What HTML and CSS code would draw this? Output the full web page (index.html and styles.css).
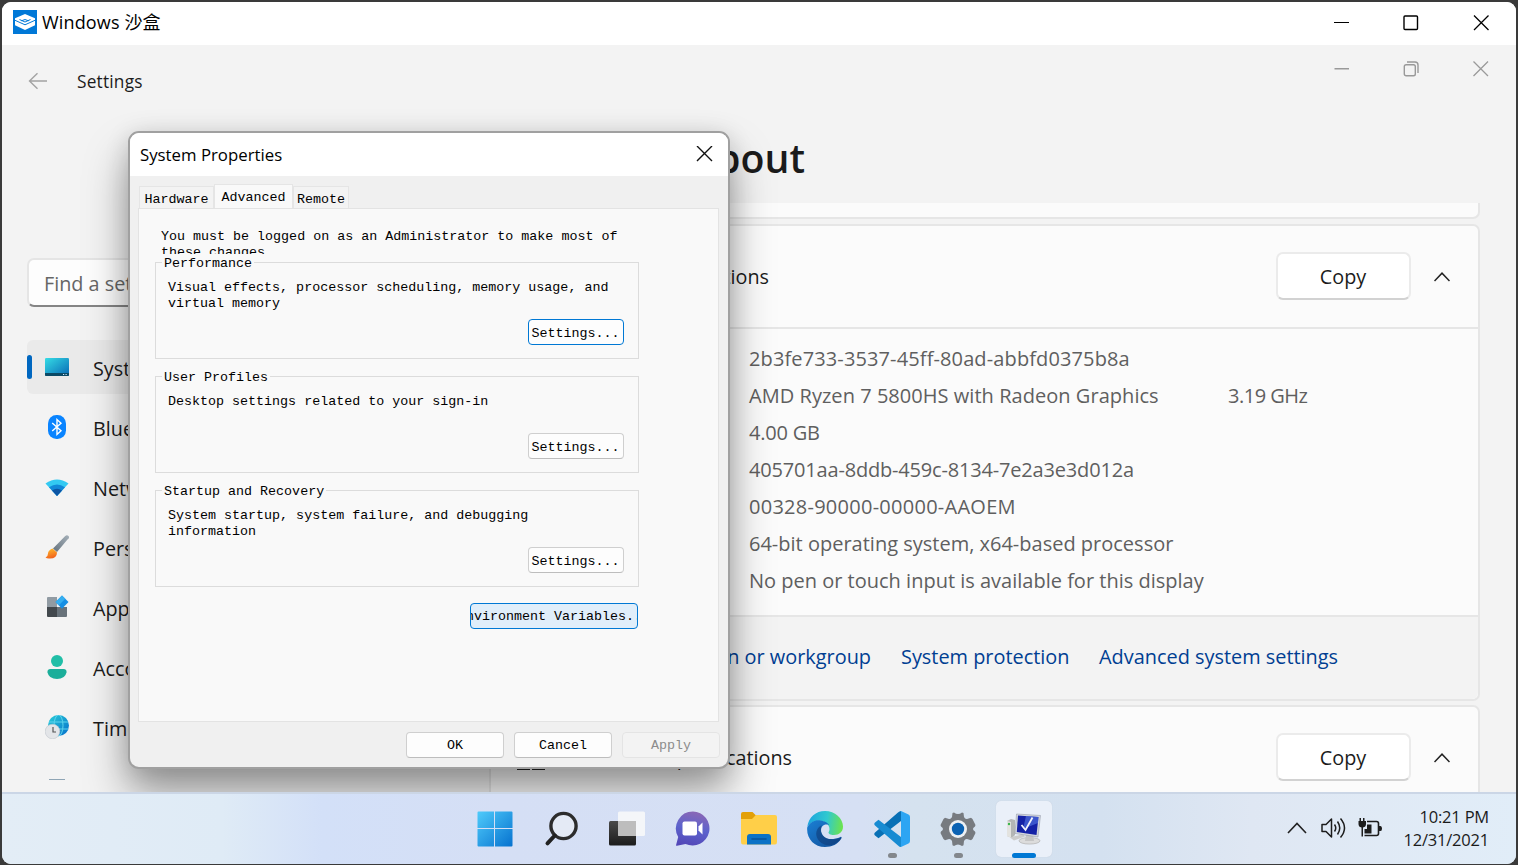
FILE: index.html
```html
<!DOCTYPE html>
<html lang="en">
<head>
<meta charset="utf-8">
<title>Windows 沙盒</title>
<link rel="stylesheet" href="styles.css">
</head>
<body>
<div class="window">
  <header class="titlebar">
    <svg class="app-logo" width="24" height="24" viewBox="0 0 24 24"><rect width="24" height="24" fill="#0078d7"/><path d="M12 4 22 8.200V15.200L12 20 2 15.200V8.200Z" fill="#fff"/><path d="M2 10.300 12 14.800 22 10.300" fill="none" stroke="#0078d7" stroke-width="1"/><path d="M6.500 9.500 12 12 17.500 9.500M8.500 10.800Q12 8.200 15.500 10.800" fill="none" stroke="#0078d7" stroke-width="1"/></svg>
    <span class="titlebar-text">Windows <span class="cjk">沙盒</span></span>
    <div class="controls">
      <svg width="16" height="16" viewBox="0 0 16 16"><path d="M1 7.500H16" stroke="#000"/></svg>
      <svg width="16" height="16" viewBox="0 0 16 16"><rect x="1" y="1" width="13.500" height="13.500" rx="1" fill="none" stroke="#000" stroke-width="1.400"/></svg>
      <svg width="16" height="16" viewBox="0 0 16 16"><path d="M1 .5 15.500 15M15.500 .5 1 15" stroke="#000" stroke-width="1.300"/></svg>
    </div>
  </header>

  <main class="settings">
    <div class="settings-bar">
      <svg class="back" width="20" height="18" viewBox="0 0 20 18"><path d="M1.500 9H19M9.500 1.300 1.500 9l8 7.700" fill="none" stroke="#a3a3a3" stroke-width="1.400"/></svg>
      <span class="settings-name">Settings</span>
      <div class="controls inner">
        <svg width="16" height="16" viewBox="0 0 16 16"><path d="M1.500 7.700H16" stroke="#999" stroke-width="1.400"/></svg>
        <svg width="16" height="16" viewBox="0 0 16 16"><rect x="1.300" y="3.700" width="11" height="11" rx="1.800" fill="none" stroke="#999" stroke-width="1.400"/><path d="M4 1H12Q15 1 15 4V12" fill="none" stroke="#999" stroke-width="1.400"/></svg>
        <svg width="16" height="16" viewBox="0 0 16 16"><path d="M.5.5 15 15M15 .5.5 15" stroke="#999" stroke-width="1.300"/></svg>
      </div>
    </div>

    <div class="settings-body">
      <nav class="sidebar">
        <div class="search">Find a setting</div>
        <div class="nav-item selected">
          <svg width="24" height="24" viewBox="0 0 24 24"><defs><linearGradient id="sys" x1="0" y1="0" x2="1" y2="1"><stop stop-color="#35dce5"/><stop offset="1" stop-color="#0868b5"/></linearGradient></defs><rect y="3" width="24" height="18" rx="1.200" fill="url(#sys)"/><path d="M0 18H24V20Q24 21 23 21H1Q0 21 0 20Z" fill="#0b4a66"/><path d="M18 19.500h1.200M20.500 19.500h1.200" stroke="#cfe9ff"/></svg>
          <span>System</span>
        </div>
        <div class="nav-item">
          <svg width="24" height="24" viewBox="0 0 24 24"><rect x="3" width="18" height="24" rx="8.500" fill="#0a84ff"/><path d="M7.200 8 16 15.800 12 19.500V4.500L16 8.200 7.200 16" fill="none" stroke="#fff" stroke-width="1.400"/></svg>
          <span>Bluetooth</span>
        </div>
        <div class="nav-item">
          <svg width="24" height="24" viewBox="0 0 24 24"><path d="M.5 8.500Q12 .5 23.500 8.500L12 21Z" fill="#33c9f2"/><path d="M4 12.300Q12 6.500 20 12.300L12 21Z" fill="#1288d8"/><path d="M7 15.500Q12 12 17 15.500L12 21Z" fill="#0c55a4"/></svg>
          <span>Network</span>
        </div>
        <div class="nav-item">
          <svg width="24" height="24" viewBox="0 0 24 24"><defs><linearGradient id="br" x1="0" y1="1" x2="1" y2="0"><stop stop-color="#65727d"/><stop offset="1" stop-color="#a5b0b9"/></linearGradient><linearGradient id="bt" x1="0" y1="0" x2=".3" y2="1"><stop stop-color="#ffc22b"/><stop offset="1" stop-color="#f2651d"/></linearGradient></defs><path d="M8 13.500 20 1.200Q22-.5 23.500 1T22.500 4.500L12 17Z" fill="url(#br)"/><path d="M7.500 13.500 12 17.500Q12 23.500 5 23.500 2 23.800.5 22.500 3 21.500 3 18.500T7.500 13.500Z" fill="url(#bt)"/></svg>
          <span>Personal</span>
        </div>
        <div class="nav-item">
          <svg width="24" height="24" viewBox="0 0 24 24"><path d="M2 3Q2 2 3 2H12V12H2Z" fill="#919ba3"/><path d="M2 12H12V22H3Q2 22 2 21Z" fill="#42484d"/><path d="M12 12H22V21Q22 22 21 22H12Z" fill="#68727a"/><path d="M17 .5 23.500 7 17 13.700 10.500 7Z" fill="#168fe4"/><path d="M17 .5 20.300 3.700 13.800 10.300 10.500 7Z" fill="#35aef0"/></svg>
          <span>Apps</span>
        </div>
        <div class="nav-item">
          <svg width="24" height="24" viewBox="0 0 24 24"><circle cx="12" cy="6" r="6" fill="#20bea7"/><path d="M5.500 14H18.500Q22 14 21.500 17.500 20 24 12 24T2.500 17.500Q2 14 5.500 14Z" fill="#1bae9a"/></svg>
          <span>Accounts</span>
        </div>
        <div class="nav-item">
          <svg width="24" height="24" viewBox="0 0 24 24"><defs><linearGradient id="gl" x1="0" y1="0" x2="1" y2="1"><stop stop-color="#2ad0d8"/><stop offset="1" stop-color="#066dcb"/></linearGradient></defs><circle cx="13.500" cy="10.500" r="10.500" fill="url(#gl)"/><path d="M4 7H23M4 14H23" stroke="#5fd4ed" stroke-width="1"/><ellipse cx="13.500" cy="10.500" rx="4.500" ry="10.500" fill="none" stroke="#5fd4ed" stroke-width="1"/><circle cx="7.500" cy="16.500" r="7.300" fill="#e3e5e8" stroke="#bfc6cc" stroke-width=".6"/><path d="M8 12V17H11" fill="none" stroke="#555" stroke-width="1.200"/></svg>
          <span>Time &amp; language</span>
        </div>
        <div class="nav-peek"></div>
      </nav>

      <section class="content">
        <h1>About</h1>
        <div class="scroller">
          <div class="card card-end"></div>
          <div class="card">
            <div class="card-head">
              <span class="card-title">Device specifications</span>
              <button class="copy">Copy</button>
              <svg class="chev" width="16" height="10" viewBox="0 0 16 10"><path d="M.5 9 8 1.200 15.500 9" fill="none" stroke="#222" stroke-width="1.500"/></svg>
            </div>
            <div class="specs">
              <p class="devname">2b3fe733-3537-45ff-80ad-abbfd0375b8a</p>
              <p class="cpu"><span>AMD Ryzen 7 5800HS with Radeon Graphics</span><span class="ghz">3.19 GHz</span></p>
              <p class="ram">4.00 GB</p>
              <p class="devid">405701aa-8ddb-459c-8134-7e2a3e3d012a</p>
              <p class="prodid">00328-90000-00000-AAOEM</p>
              <p>64-bit operating system, x64-based processor</p>
              <p>No pen or touch input is available for this display</p>
            </div>
            <div class="links">
              <a class="domain">Domain or workgroup</a><a class="protect">System protection</a><a>Advanced system settings</a>
            </div>
          </div>
          <div class="card card-win">
            <div class="card-head">
              <svg class="win-icon" width="28" height="28" viewBox="0 0 28 28"><path d="M0 0H13V13H0ZM15 0H28V13H15ZM0 15H13V28H0ZM15 15H28V28H15Z" fill="#222"/></svg>
              <span class="card-title win-title">Windows specifications</span>
              <button class="copy">Copy</button>
              <svg class="chev" width="16" height="10" viewBox="0 0 16 10"><path d="M.5 9 8 1.200 15.500 9" fill="none" stroke="#222" stroke-width="1.500"/></svg>
            </div>
          </div>
        </div>
      </section>
    </div>

    <div class="dialog">
      <div class="dialog-title"><span>System Properties</span>
        <svg width="17" height="17" viewBox="0 0 17 17"><path d="M1 0 16 15M16 0 1 15" stroke="#111" stroke-width="1.400"/></svg>
      </div>
      <div class="tabs"><span class="tab tab-hw">Hardware</span><span class="tab active">Advanced</span><span class="tab tab-rm">Remote</span></div>
      <div class="panel">
        <p class="note">You must be logged on as an Administrator to make most of<br>these changes.</p>
        <div class="group"><span class="legend">Performance</span>
          <p>Visual effects, processor scheduling, memory usage, and<br>virtual memory</p>
          <button class="btn focus">Settings...</button></div>
        <div class="group"><span class="legend">User Profiles</span>
          <p>Desktop settings related to your sign-in</p>
          <button class="btn">Settings...</button></div>
        <div class="group"><span class="legend">Startup and Recovery</span>
          <p>System startup, system failure, and debugging<br>information</p>
          <button class="btn">Settings...</button></div>
        <button class="btn env"><span>Environment Variables...</span></button>
      </div>
      <div class="dialog-foot"><button class="btn">OK</button><button class="btn">Cancel</button><button class="btn disabled">Apply</button></div>
    </div>
  </main>

  <footer class="taskbar">
    <div class="apps">
      <div class="app"><svg width="36" height="36" viewBox="0 0 36 36"><defs><linearGradient id="st" x1="0" y1="0" x2="1" y2="1"><stop stop-color="#4fcbfb"/><stop offset="1" stop-color="#0672cf"/></linearGradient></defs><path d="M1.500.5H17V17H.5V1.500Q.5.500 1.500.5ZM18 .5H34.500Q35.500.500 35.500 1.500V17H18ZM.5 18H17V35.500H1.500Q.5 35.500.5 34.500ZM18 18H35.500V34.500Q35.500 35.500 34.500 35.500H18Z" fill="url(#st)"/></svg></div>
      <div class="app"><svg width="36" height="36" viewBox="0 0 36 36"><circle cx="20.500" cy="15" r="12.600" fill="#e4eaf5" stroke="#2c2c2c" stroke-width="3.400"/><path d="M11.800 24.500 4.500 32.300" stroke="#222" stroke-width="4" stroke-linecap="round"/></svg></div>
      <div class="app"><svg width="36" height="36" viewBox="0 0 36 36"><defs><linearGradient id="tv" x1="0" y1="0" x2="0" y2="1"><stop stop-color="#4a4a4a"/><stop offset="1" stop-color="#1c1c1c"/></linearGradient></defs><rect y="10" width="27" height="24.500" rx="1.500" fill="url(#tv)"/><rect x="9" y=".5" width="27" height="24.500" rx="1.500" fill="#f6f7f9" opacity=".92"/><path d="M9 10H27V25H10.500Q9 25 9 23.500Z" fill="#bdbdbd"/></svg></div>
      <div class="app"><svg width="36" height="36" viewBox="0 0 36 36"><defs><linearGradient id="ch" x1=".6" y1="0" x2=".4" y2="1"><stop stop-color="#8b67b5"/><stop offset=".5" stop-color="#5c63cd"/><stop offset="1" stop-color="#5448b8"/></linearGradient></defs><path d="M18 .5A17 17 0 1 1 10.500 33L2 34.800Q.7 35 1.200 33.500L3.200 26A17 17 0 0 1 18 .5Z" fill="url(#ch)"/><rect x="7.500" y="10.500" width="14.500" height="14" rx="2" fill="#fff"/><path d="M23.500 15.500 27.500 11.500V23.500L23.500 19.500Z" fill="#fff"/></svg></div>
      <div class="app"><svg width="36" height="36" viewBox="0 0 36 36"><path d="M0 3Q0 1 2 1H11.500L15 4.500 12 8H0Z" fill="#e3a008"/><path d="M0 8H11L15 4H34Q36 4 36 6V31Q36 33.500 34 33.500H2Q0 33.500 0 31Z" fill="#ffcf48"/><path d="M6 33.500V26Q6 23 9 23H27Q30 23 30 26V33.500Z" fill="#0b72c6"/><path d="M11 28H25" stroke="#07539a" stroke-width="1.600" stroke-linecap="round"/></svg></div>
      <div class="app"><svg width="36" height="36" viewBox="0 0 36 36"><defs><linearGradient id="e1" x1="0" y1=".3" x2="1" y2=".4"><stop stop-color="#1ca4df"/><stop offset=".55" stop-color="#30c9cf"/><stop offset="1" stop-color="#6be34f"/></linearGradient><linearGradient id="e2" x1="0" y1="0" x2="1" y2="1"><stop stop-color="#1a80d5"/><stop offset="1" stop-color="#124d96"/></linearGradient></defs><path d="M.3 16C1.500 6 9 0 18 0 28 0 36 7.500 36 15.500 36 21 32 24 27 24 23 24 21.500 22.500 21.500 21.500 24 18 22 12 15 10 9 9 3 11 .3 16Z" fill="url(#e1)"/><path d="M.2 16.500C3 10.500 9 8.500 14 9.500 19 10.500 22 13 22 14 16 12 12.500 17 14.500 22 16.500 28 24 30 33.500 26 34.500 25.500 35 26.500 34 28 31 33 25 36 18 36 7 36-.7 27.500.2 16.500Z" fill="url(#e2)"/><path d="M14.500 14.300C9.500 17 7.500 23 11 28.500 14 33 20 35 25 34 31 32 34 28 34.500 26.500 25 30.500 16 28 14.200 21 13.800 18.500 14.500 16 14.500 14.300Z" fill="#103f7d" opacity=".65"/></svg></div>
      <div class="app running"><svg width="36" height="36" viewBox="0 0 36 36"><path d="M27 0V10L4.500 27.200 1 24.500Q-.5 23 1 21.500L24 1.500Q25.500 0 27 0Z" fill="#0870b5"/><path d="M27 36V26L4.500 8.800 1 11.500Q-.5 13 1 14.500L24 34.500Q25.500 36 27 36Z" fill="#178bd2"/><path d="M27 0 34.500 3.500Q36 4.200 36 6V30Q36 31.800 34.500 32.500L27 36Z" fill="#2da5f3"/></svg></div>
      <div class="app running"><svg width="36" height="36" viewBox="0 0 36 36"><path d="M14 1.500Q18 4.500 22 1.500L23.500 2 24 6Q25 8.300 27 8L31 6.800 32.500 8 35.500 14 35 15.500Q31 18 35 20.500L35.500 22 32.500 28 31 29.300 27 28Q25 27.800 24 30L23.500 34.300 22 35Q18 32 14 35L12.500 34.300 12 30Q11 27.800 9 28L5 29.300 3.500 28 .5 22 1 20.500Q5 18 1 15.500L.5 14 3.500 8 5 6.800 9 8Q11 8.300 12 6L12.500 2Z" fill="#777b80"/><circle cx="18" cy="18" r="9" fill="#edf0f3"/><circle cx="18" cy="18" r="6.200" fill="#0b62b3"/></svg></div>
      <div class="app current"><svg width="36" height="36" viewBox="0 0 36 36"><path d="M1 10 5 8 9 9V24L6 27 1 25Z" fill="#b4b6b5"/><path d="M1 10 5 11V27L1 25Z" fill="#e3e3e0"/><circle cx="3" cy="13" r="1.200" fill="#39b54a"/><path d="M4 26.500 17 23 19 25.500 8 29.500Z" fill="#ccc"/><ellipse cx="23.500" cy="29.800" rx="10.500" ry="3.300" fill="#dcdcdc" stroke="#aaa" stroke-width=".6"/><path d="M20 23H27L28 30H19Z" fill="#c5c5c5"/><path d="M10.500 3 34.500 4.500 32 26 9 22.500Z" fill="#d4d7dd" stroke="#8b90a0" stroke-width=".5"/><path d="M12 4.500 32.500 6 30.500 24 10.800 21Z" fill="#1522a6"/><path d="M20 5.100 32.500 6 32 12 17 18Z" fill="#5273e0" opacity=".65"/><path d="M15.500 14 19.500 19 26.500 6.500" fill="none" stroke="#f1f3fb" stroke-width="1.800"/></svg></div>
    </div>
    <div class="tray">
      <svg width="20" height="12" viewBox="0 0 20 12"><path d="M1 11 10 1.500 19 11" fill="none" stroke="#222" stroke-width="1.600"/></svg>
      <svg width="26" height="22" viewBox="0 0 26 22"><path d="M1 7.500H5L10.500 2V20L5 14.500H1Z" fill="none" stroke="#1c1c1c" stroke-width="1.500" stroke-linejoin="round"/><path d="M13.500 7.500Q16 11 13.500 14.500M16.500 4.500Q21 11 16.500 17.500M19.500 1.500Q27.500 11 19.500 20.500" fill="none" stroke="#1c1c1c" stroke-width="1.500"/></svg>
      <svg width="24" height="20" viewBox="0 0 24 20"><path d="M9 3.500H18.500Q20.500 3.500 20.500 5.500V15.500Q20.500 17.500 18.500 17.500H6.500" fill="none" stroke="#1c1c1c" stroke-width="1.600"/><path d="M20.500 8H22.500Q24 8 24 10.500T22.500 13H20.500ZM6.500 15.500V11H9V6.500H13.500V15.500ZM1.500 0H3V3H5V0H6.500V3H8V6Q8 9 5 9.500V18.500H3.500V9.500Q.5 9 .5 6V3H1.500Z" fill="#1c1c1c"/></svg>
      <div class="clock"><span class="time">10:21 PM</span><span class="date">12/31/2021</span></div>
    </div>
  </footer>
</div>
</body>
</html>
```

FILE: styles.css
```css
* { box-sizing: border-box; }
html, body { margin: 0; height: 100%; overflow: hidden; }
body { padding: 2px 2px 1px; background: #3a3a3a; font-family: "Open Sans", "Noto Sans", sans-serif; color: #1b1b1b; }
p, h1 { margin: 0; }
button { font: inherit; color: inherit; padding: 0; }
svg { display: block; flex: none; }

.window { height: 862px; border-radius: 9px; overflow: hidden; display: flex; flex-direction: column; background: #f3f3f3; }
.titlebar { height: 43px; flex: none; background: #fff; display: flex; align-items: center; padding: 0 27px 3px 11px; color: #000; }
.titlebar-text { margin: -1px 0 0 5px; font-size: 18px; letter-spacing: .15px; white-space: nowrap; }
.cjk { font-family: "Noto Sans CJK SC", sans-serif; font-weight: 400; line-height: 1; }
.controls { margin-left: auto; display: flex; gap: 54px; padding-top: 1px; }

.settings { position: relative; height: 747px; flex: none; overflow: hidden; display: flex; flex-direction: column; }
.settings-bar { height: 72px; flex: none; display: flex; align-items: center; padding: 0 27px 0 26px; }
.settings-name { font-size: 17.3px; letter-spacing: .2px; margin-left: 29px; }
.inner { padding: 0 0 24px; }
.settings-body { flex: 1; min-height: 0; display: flex; }

.sidebar { width: 487px; flex: none; padding: 141px 12px 0 25px; display: flex; flex-direction: column; font-size: 19.8px; }
.search { height: 49px; border: 2px solid #e5e5e5; border-bottom-color: #858585; border-radius: 7px; background: #fdfdfd; color: #666; padding-left: 15px; line-height: 47px; margin-bottom: 33px; }
.nav-item { height: 54px; flex: none; margin-bottom: 6px; display: flex; align-items: center; gap: 24px; padding-left: 18px; border-radius: 6px; }
.nav-item span { padding-top: 3px; white-space: nowrap; }
.nav-item.selected { background: #eaeaea; padding-left: 0; gap: 0; }
.nav-item.selected::before { content: ""; width: 5px; height: 24px; border-radius: 3px; background: #0067c0; margin-right: 13px; }
.nav-item.selected span { margin-left: 24px; }
.nav-peek { width: 16px; height: 1px; background: #8fa5b5; margin: 19px 0 0 22px; flex: none; }

.content { width: 991px; flex: none; display: flex; flex-direction: column; }
h1 { height: 86px; width: 316px; text-align: right; font-size: 39.3px; line-height: 82px; font-weight: 600; flex: none; }
.scroller { display: flex; flex-direction: column; gap: 5px; }
.card { border: 2px solid #e6e6e6; border-radius: 7px; background: #fbfbfb; }
.card-end { height: 16px; border-top: 0; border-radius: 0 0 7px 7px; }
.card-head { height: 101px; display: flex; align-items: center; padding: 0 28px 1px 0; font-size: 19.8px; }
.card-title { width: 278px; text-align: right; padding-top: 1px; white-space: nowrap; }
.copy { width: 135px; height: 48px; margin: 0 -1px 0 auto; border: 2px solid #ebebeb; border-bottom-color: #d2d2d2; border-radius: 7px; background: #fff; padding-right: 1px; }
.chev { margin-left: 24px; margin-top: 2px; }
.specs { border-top: 2px solid #e6e6e6; padding: 11px 0 16px 258px; font-size: 20px; color: #5f5f5f; }
.specs p { height: 37px; line-height: 38px; white-space: nowrap; }
.specs .devname { letter-spacing: .12px; }
.specs .ram { letter-spacing: -.2px; }
.specs .devid { letter-spacing: -.18px; }
.specs .prodid { letter-spacing: .26px; }
.cpu > span:first-child { display: inline-block; width: 479px; letter-spacing: .04px; }
.ghz { letter-spacing: -.5px; }
.links { height: 84px; border-top: 2px solid #e6e6e6; background: #f3f3f3; border-radius: 0 0 6px 6px; display: flex; align-items: center; font-size: 19.9px; padding-bottom: 3px; color: #003e92; white-space: nowrap; }
.domain { width: 380px; text-align: right; }
.protect { width: 168px; margin: 0 30px; }
.card-win { height: 110px; margin-top: -1px; }
.win-icon { margin: -2px 0 0 26px; }
.win-title { width: 247px; }

.dialog { position: absolute; left: 126px; top: 86px; width: 602px; height: 638px; border: 2px solid #a0a0a0; border-radius: 11px; overflow: hidden; background: #f0f0f0; box-shadow: 0 26px 44px rgba(0,0,0,.36), 0 4px 24px rgba(0,0,0,.14); color: #000; font: 13.35px/16px "Liberation Mono", monospace; display: flex; flex-direction: column; }
.dialog-title { height: 43px; flex: none; background: #fff; display: flex; justify-content: space-between; align-items: center; padding: 0 15px 1px 10px; font: 16.8px "Open Sans", sans-serif; }
.tabs { height: 32px; flex: none; display: flex; align-items: flex-end; padding-left: 9px; }
.tab { height: 22px; padding-top: 5px; text-align: center; background: #f3f3f3; border: 1px solid #e5e5e5; border-bottom: 0; }
.tab-hw { width: 75px; }
.tab.active { width: 79px; height: 24px; background: #f9f9f9; }
.tab-rm { width: 56px; }
.panel { width: 581px; height: 514px; flex: none; margin-left: 8px; border: 1px solid #e3e3e3; background: #f9f9f9; padding: 19px 79px 0 16px; }
.note { height: 26px; overflow: hidden; margin: 0 0 8px 6px; padding-top: 1px; white-space: nowrap; }
.group { height: 97px; border: 1px solid #dcdcdc; margin-bottom: 17px; padding: 0 14px 13px 12px; display: flex; flex-direction: column; white-space: nowrap; }
.legend { align-self: flex-start; margin: -7px 0 8px -6px; padding: 0 2px; background: #f9f9f9; height: 16px; }
.btn { height: 26px; border: 1px solid #cfcfcf; border-bottom-color: #bdbdbd; border-radius: 4px; background: #fdfdfd; padding-top: 2px; line-height: 16px; white-space: nowrap; }
.group .btn { width: 96px; padding: 3px 1px 0 0; margin-top: auto; align-self: flex-end; }
.btn.focus { border-color: #0078d4; }
.btn.env { display: flex; justify-content: center; align-items: center; overflow: hidden; width: 168px; margin: -1px 1px 0 auto; border-color: #0078d4; background: #e0eefa; }
.env span { flex: none; }
.dialog-foot { display: flex; justify-content: flex-end; gap: 10px; padding: 10px 8px 0 0; }
.dialog-foot .btn { width: 98px; }
.btn.disabled { color: #8c8c8c; background: #f3f3f3; border-color: #e4e4e4; }

.taskbar { position: relative; height: 72px; flex: none; display: flex; align-items: center; justify-content: space-between; border-top: 2px solid #cbd6e6; background: linear-gradient(90deg, #e3edf6 0, #dfebf6 220px, #d3e0f8 320px, #d5dff5 500px, #d6e0f4 860px, #d5e2ef 910px, #d4e1f0 1100px, #dfe7f3 1250px, #e1edf8 100%); padding: 0 27px 0 465px; }
.apps { display: flex; gap: 10.100px; padding-bottom: 1px; }
.app { position: relative; width: 56px; height: 56px; display: flex; align-items: center; justify-content: center; }
.running::after, .current::after { content: ""; position: absolute; bottom: -1px; left: 24px; width: 9px; height: 5px; border-radius: 3px; background: #83878c; }
.current { background: #eaf0f9; border-radius: 5px; box-shadow: 0 0 1px #bcc5d2; }
.current::after { left: 16px; width: 24px; background: #0078d4; }
.tray { display: flex; align-items: center; padding-bottom: 2px; }
.tray svg:nth-child(2) { margin-left: 14px; }
.tray svg:nth-child(3) { margin-left: 11px; }
.clock { width: 90px; margin-left: 17px; display: flex; flex-direction: column; align-items: flex-end; font-size: 16.500px; line-height: 23px; letter-spacing: -.2px; white-space: nowrap; }
```
